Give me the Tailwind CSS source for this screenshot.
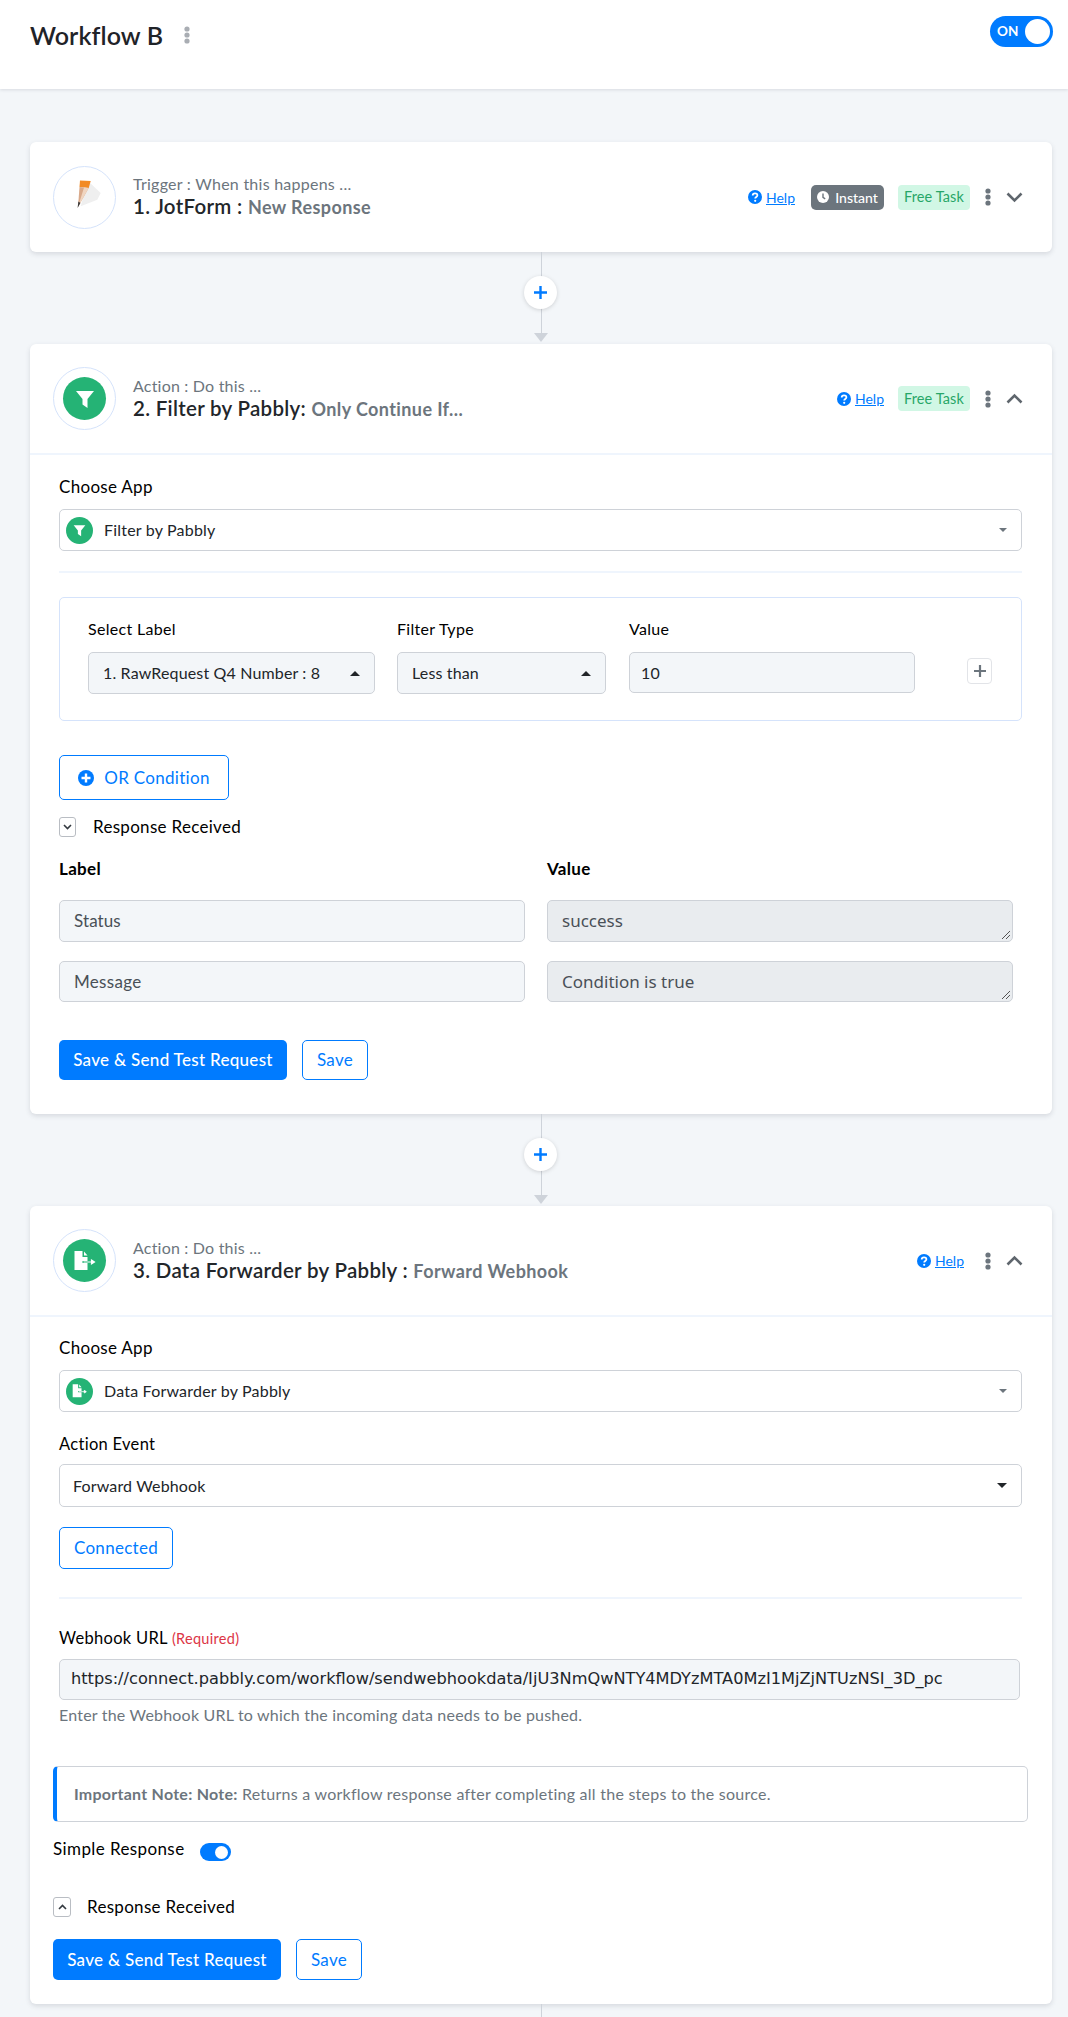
<!DOCTYPE html>
<html lang="en">
<head>
    <meta charset="UTF-8">
    <meta name="viewport" content="width=device-width, initial-scale=1.0">
    <title>Workflow B</title>
    <script src="https://cdn.jsdelivr.net/npm/@tailwindcss/browser@4"></script>
</head>
<body class="bg-[#f3f6f9] font-['Lato','Noto_Sans',sans-serif] text-[17px] tracking-[0.3px] text-black overflow-hidden h-[2017px]">
    <!-- top bar -->
    <header class="bg-white h-[89px] shadow-[0_1px_3px_rgba(60,70,90,0.15)] flex items-start justify-between pl-[30px] pr-[15px] relative">
        <div class="flex items-center mt-[19px] h-[32px]">
            <h1 class="text-[25px] tracking-[0.1px] font-semibold text-[#1f2328] leading-none">Workflow B</h1>
            <svg class="ml-[21px]" width="6" height="18" viewBox="0 0 6 18" fill="#a9adb3"><circle cx="3" cy="3" r="2.6"/><circle cx="3" cy="9" r="2.6"/><circle cx="3" cy="15" r="2.6"/></svg>
        </div>
        <div class="mt-[16px] w-[63px] h-[31px] rounded-full bg-[#007bff] flex items-center justify-between pl-[7px] pr-[3px]">
            <span class="text-white text-[13.5px] tracking-normal font-bold leading-none">ON</span>
            <span class="w-[25px] h-[25px] rounded-full bg-white"></span>
        </div>
    </header>

    <main class="pl-[30px] pr-[16px] pt-[53px]">
        <!-- step 1 -->
        <section class="bg-white rounded-[6px] shadow-[0_2px_5px_rgba(60,70,90,0.16)] h-[110px] flex items-center pl-[23px] pr-[29px]">
            <div class="w-[63px] h-[63px] rounded-full border border-[#d5e3fb] flex items-center justify-center shrink-0">
                <svg width="36" height="36" viewBox="0 0 36 36">
                    <path d="M21 2 L33.7 14 L30.3 20.7 L13.7 27.3 Z" fill="#efefef"/>
                    <path d="M13 1.5 L23.7 2 L21.7 9 L12.5 8 Z" fill="#f28a24"/>
                    <path d="M12.5 8 L21.7 9 L11 28 Z" fill="#d9a98a"/>
                    <path d="M17 8.5 L21.7 9 L11 28 Z" fill="#f0d5c0"/>
                    <path d="M11.4 22.5 L13.4 24 L10.6 29 Z" fill="#3a3a3a"/>
                </svg>
            </div>
            <div class="ml-[17px] flex-1">
                <p class="text-[16px] tracking-[0.25px] leading-[19px] text-[#6c757d]">Trigger : When this happens ...</p>
                <p class="text-[20.5px] leading-[26px] font-semibold text-[#22262a]">1. JotForm : <span class="text-[18px] tracking-[0.4px] font-bold text-[#6c757d]">New Response</span></p>
            </div>
            <div class="flex items-center tracking-normal">
                <a class="flex items-center text-[#007bff] text-[14px] underline gap-[4px]"><svg width="14" height="14" viewBox="0 0 14 14"><circle cx="7" cy="7" r="7" fill="#007bff"/><path d="M4.7 5.4 C4.7 2.6 9.4 2.6 9.4 5.3 C9.4 7 7.2 6.9 7.2 8.5" fill="none" stroke="#fff" stroke-width="1.8"/><circle cx="7.2" cy="10.8" r="1.1" fill="#fff"/></svg>Help</a>
                <span class="ml-[16px] h-[25px] w-[73px] rounded-[5px] bg-[#6c757d] text-white text-[14px] font-medium flex items-center justify-center gap-[6px]"><svg width="12" height="12" viewBox="0 0 12 12"><circle cx="6" cy="6" r="6" fill="#fff"/><path d="M6 2.6 V6.4 L8.2 7.8" fill="none" stroke="#6c757d" stroke-width="1.4"/></svg>Instant</span>
                <span class="ml-[14px] h-[25px] w-[72px] rounded-[4px] bg-[#d1f7e5] text-[#28a668] text-[14.5px] tracking-[0.1px] flex items-center justify-center">Free Task</span>
                <svg class="ml-[15px]" width="6" height="18" viewBox="0 0 6 18" fill="#6c757d"><circle cx="3" cy="3" r="2.6"/><circle cx="3" cy="9" r="2.6"/><circle cx="3" cy="15" r="2.6"/></svg>
                <svg class="ml-[15px]" width="17" height="11" viewBox="0 0 17 11"><path d="M1.5 1.5 L8.5 8.5 L15.5 1.5" fill="none" stroke="#5f666d" stroke-width="2.6"/></svg>
            </div>
        </section>

        <!-- connector -->
        <div class="relative h-[92px]">
            <div class="absolute left-[510.5px] top-0 w-[1.5px] h-[84px] bg-[#ced3da]"></div>
            <div class="absolute left-[504px] top-[81px] w-0 h-0 border-l-[7px] border-r-[7px] border-t-[9px] border-l-transparent border-r-transparent border-t-[#ced3da]"></div>
            <div class="absolute left-[494px] top-[24px] w-[33px] h-[33px] rounded-full bg-white shadow-[0_1px_4px_rgba(0,0,0,0.15)] flex items-center justify-center">
                <svg width="15" height="15" viewBox="0 0 15 15"><path d="M7.5 1 V14 M1 7.5 H14" stroke="#007bff" stroke-width="2.4"/></svg>
            </div>
        </div>

        <!-- step 2 -->
        <section class="bg-white rounded-[6px] shadow-[0_2px_5px_rgba(60,70,90,0.16)] h-[770px]">
            <div class="h-[111px] flex items-center pl-[23px] pr-[29px] border-b-2 border-[#eff5fd]">
                <div class="w-[63px] h-[63px] rounded-full border border-[#d5e3fb] flex items-center justify-center shrink-0">
                    <span class="w-[43px] h-[43px] rounded-full bg-[#25b375] flex items-center justify-center">
                        <svg width="20" height="20" viewBox="0 0 20 20"><path d="M1 2 H19 L12.5 10 V19 L7.5 15.5 V10 Z" fill="#fff"/></svg>
                    </span>
                </div>
                <div class="ml-[17px] flex-1">
                    <p class="text-[16px] tracking-[0.2px] leading-[19px] text-[#6c757d]">Action : Do this ...</p>
                    <p class="text-[20.5px] leading-[26px] font-semibold text-[#22262a]">2. Filter by Pabbly: <span class="text-[18px] tracking-[0.4px] font-bold text-[#6c757d]">Only Continue If...</span></p>
                </div>
                <div class="flex items-center tracking-normal">
                    <a class="flex items-center text-[#007bff] text-[14px] underline gap-[4px]"><svg width="14" height="14" viewBox="0 0 14 14"><circle cx="7" cy="7" r="7" fill="#007bff"/><path d="M4.7 5.4 C4.7 2.6 9.4 2.6 9.4 5.3 C9.4 7 7.2 6.9 7.2 8.5" fill="none" stroke="#fff" stroke-width="1.8"/><circle cx="7.2" cy="10.8" r="1.1" fill="#fff"/></svg>Help</a>
                    <span class="ml-[14px] h-[25px] w-[72px] rounded-[4px] bg-[#d1f7e5] text-[#28a668] text-[14.5px] tracking-[0.1px] flex items-center justify-center">Free Task</span>
                    <svg class="ml-[15px]" width="6" height="18" viewBox="0 0 6 18" fill="#6c757d"><circle cx="3" cy="3" r="2.6"/><circle cx="3" cy="9" r="2.6"/><circle cx="3" cy="15" r="2.6"/></svg>
                    <svg class="ml-[15px]" width="17" height="11" viewBox="0 0 17 11"><path d="M1.5 9.5 L8.5 2.5 L15.5 9.5" fill="none" stroke="#5f666d" stroke-width="2.6"/></svg>
                </div>
            </div>
            <div class="pl-[29px] pr-[30px]">
                <label class="block mt-[22px] leading-[20px]">Choose App</label>
                <div class="mt-[12px] h-[42px] rounded-[5px] border border-[#ced2d8] flex items-center pl-[6px] pr-[14px]">
                    <span class="w-[27px] h-[27px] rounded-full bg-[#25b375] flex items-center justify-center"><svg width="13" height="13" viewBox="0 0 20 20"><path d="M1 2 H19 L12.5 10 V19 L7.5 15.5 V10 Z" fill="#fff"/></svg></span>
                    <span class="ml-[11px] flex-1 text-[16px] tracking-[0.2px] text-[#212529]">Filter by Pabbly</span>
                    <span class="w-0 h-0 border-l-[4px] border-r-[4px] border-t-[4px] border-l-transparent border-r-transparent border-t-[#6c757d]"></span>
                </div>
                <div class="mt-[20px] h-[2px] bg-[#eff5fd]"></div>

                <!-- filter row -->
                <div class="mt-[24px] h-[124px] rounded-[5px] border border-[#d5e3fb] pl-[28px] pt-[21px] flex items-start text-[16px]">
                    <div class="w-[287px] shrink-0">
                        <label class="block leading-[20px]">Select Label</label>
                        <div class="mt-[13px] h-[42px] rounded-[5px] border border-[#ced2d8] bg-[#f3f6f9] flex items-center justify-between pl-[14px] pr-[14px]">
                            <span class="tracking-[0.15px] text-[#212529]">1. RawRequest Q4 Number : 8</span>
                            <span class="w-0 h-0 border-l-[5px] border-r-[5px] border-b-[5px] border-l-transparent border-r-transparent border-b-[#212529]"></span>
                        </div>
                    </div>
                    <div class="w-[209px] ml-[22px] shrink-0">
                        <label class="block leading-[20px]">Filter Type</label>
                        <div class="mt-[13px] h-[42px] rounded-[5px] border border-[#ced2d8] bg-[#f3f6f9] flex items-center justify-between pl-[14px] pr-[14px]">
                            <span class="tracking-[0.15px] text-[#212529]">Less than</span>
                            <span class="w-0 h-0 border-l-[5px] border-r-[5px] border-b-[5px] border-l-transparent border-r-transparent border-b-[#212529]"></span>
                        </div>
                    </div>
                    <div class="w-[286px] ml-[23px] shrink-0">
                        <label class="block leading-[20px]">Value</label>
                        <div class="mt-[13px] h-[41px] rounded-[5px] border border-[#ced2d8] bg-[#f3f6f9] flex items-center pl-[11px] text-[#212529]">10</div>
                    </div>
                    <div class="ml-[52px] mt-[39px] w-[25px] h-[26px] rounded-[4px] border border-[#e2e4e8] flex items-center justify-center">
                        <svg width="12" height="12" viewBox="0 0 12 12"><path d="M6 0 V12 M0 6 H12" stroke="#6c757d" stroke-width="2.2"/></svg>
                    </div>
                </div>

                <button class="mt-[34px] h-[45px] w-[170px] rounded-[5px] border border-[#007bff] text-[#007bff] flex items-center justify-center gap-[10px]">
                    <svg width="16" height="16" viewBox="0 0 16 16"><circle cx="8" cy="8" r="8" fill="#007bff"/><path d="M8 3.5 V12.5 M3.5 8 H12.5" stroke="#fff" stroke-width="2.4"/></svg>
                    OR Condition
                </button>
                <div class="mt-[17px] flex items-center h-[20px]">
                    <span class="w-[17px] h-[20px] rounded-[3px] border border-[#b9bdc3] flex items-center justify-center"><svg width="9" height="6" viewBox="0 0 9 6"><path d="M1 1 L4.5 4.5 L8 1" fill="none" stroke="#343a40" stroke-width="1.6"/></svg></span>
                    <span class="ml-[17px]">Response Received</span>
                </div>
                <div class="mt-[21px] grid grid-cols-[465.5px_465.5px] gap-x-[22.5px]">
                    <div class="font-bold leading-[22px]">Label</div>
                    <div class="font-bold leading-[22px]">Value</div>
                    <div class="mt-[20px] h-[42px] rounded-[5px] border border-[#ced2d8] bg-[#f3f6f9] flex items-center pl-[14px] tracking-[0.1px] text-[#495057]">Status</div>
                    <div class="mt-[20px] h-[42px] rounded-[5px] border border-[#ced2d8] bg-[#e9ecef] flex items-center pl-[14px] text-[#495057] font-['Noto_Sans',sans-serif] tracking-normal text-[17px] relative">success<svg class="absolute right-[1px] bottom-[1px]" width="10" height="10" viewBox="0 0 10 10"><path d="M9 1 L1 9 M9 5 L5 9" stroke="#555" stroke-width="1"/></svg></div>
                    <div class="mt-[19px] h-[41px] rounded-[5px] border border-[#ced2d8] bg-[#f3f6f9] flex items-center pl-[14px] text-[#495057]">Message</div>
                    <div class="mt-[19px] h-[41px] rounded-[5px] border border-[#ced2d8] bg-[#e9ecef] flex items-center pl-[14px] text-[#495057] font-['Noto_Sans',sans-serif] tracking-normal text-[17px] relative">Condition is true<svg class="absolute right-[1px] bottom-[1px]" width="10" height="10" viewBox="0 0 10 10"><path d="M9 1 L1 9 M9 5 L5 9" stroke="#555" stroke-width="1"/></svg></div>
                </div>
                <div class="mt-[38px] flex gap-[15px]">
                    <button class="h-[40px] w-[228px] rounded-[5px] bg-[#007bff] text-white font-medium">Save &amp; Send Test Request</button>
                    <button class="h-[40px] w-[66px] rounded-[5px] border border-[#007bff] text-[#007bff]">Save</button>
                </div>
            </div>
        </section>

        <!-- connector -->
        <div class="relative h-[92px]">
            <div class="absolute left-[510.5px] top-0 w-[1.5px] h-[84px] bg-[#ced3da]"></div>
            <div class="absolute left-[504px] top-[81px] w-0 h-0 border-l-[7px] border-r-[7px] border-t-[9px] border-l-transparent border-r-transparent border-t-[#ced3da]"></div>
            <div class="absolute left-[494px] top-[24px] w-[33px] h-[33px] rounded-full bg-white shadow-[0_1px_4px_rgba(0,0,0,0.15)] flex items-center justify-center">
                <svg width="15" height="15" viewBox="0 0 15 15"><path d="M7.5 1 V14 M1 7.5 H14" stroke="#007bff" stroke-width="2.4"/></svg>
            </div>
        </div>

        <!-- step 3 -->
        <section class="bg-white rounded-[6px] shadow-[0_2px_5px_rgba(60,70,90,0.16)] h-[798px]">
            <div class="h-[111px] flex items-center pl-[23px] pr-[29px] border-b-2 border-[#eff5fd]">
                <div class="w-[63px] h-[63px] rounded-full border border-[#d5e3fb] flex items-center justify-center shrink-0">
                    <span class="w-[43px] h-[43px] rounded-full bg-[#25b375] flex items-center justify-center">
                        <svg width="23" height="20" viewBox="0 0 22 20"><path d="M1 0 H9 V6 H14 V10 H9 V12 H14 V19 H1 Z M10.5 0.5 L14 4.5 H10.5 Z" fill="#fff"/><path d="M10 11 H20 M18 9 L21 11 L18 13 Z" fill="#fff" stroke="#fff" stroke-width="1.2"/></svg>
                    </span>
                </div>
                <div class="ml-[17px] flex-1">
                    <p class="text-[16px] tracking-[0.2px] leading-[19px] text-[#6c757d]">Action : Do this ...</p>
                    <p class="text-[20.5px] leading-[26px] font-semibold text-[#22262a]">3. Data Forwarder by Pabbly : <span class="text-[18px] tracking-[0.4px] font-bold text-[#6c757d]">Forward Webhook</span></p>
                </div>
                <div class="flex items-center tracking-normal">
                    <a class="flex items-center text-[#007bff] text-[14px] underline gap-[4px]"><svg width="14" height="14" viewBox="0 0 14 14"><circle cx="7" cy="7" r="7" fill="#007bff"/><path d="M4.7 5.4 C4.7 2.6 9.4 2.6 9.4 5.3 C9.4 7 7.2 6.9 7.2 8.5" fill="none" stroke="#fff" stroke-width="1.8"/><circle cx="7.2" cy="10.8" r="1.1" fill="#fff"/></svg>Help</a>
                    <svg class="ml-[21px]" width="6" height="18" viewBox="0 0 6 18" fill="#6c757d"><circle cx="3" cy="3" r="2.6"/><circle cx="3" cy="9" r="2.6"/><circle cx="3" cy="15" r="2.6"/></svg>
                    <svg class="ml-[15px]" width="17" height="11" viewBox="0 0 17 11"><path d="M1.5 9.5 L8.5 2.5 L15.5 9.5" fill="none" stroke="#5f666d" stroke-width="2.6"/></svg>
                </div>
            </div>
            <div class="pl-[29px] pr-[30px]">
                <label class="block mt-[21px] leading-[20px]">Choose App</label>
                <div class="mt-[12px] h-[42px] rounded-[5px] border border-[#ced2d8] flex items-center pl-[6px] pr-[14px]">
                    <span class="w-[27px] h-[27px] rounded-full bg-[#25b375] flex items-center justify-center"><svg width="15" height="14" viewBox="0 0 22 20"><path d="M1 0 H9 V6 H14 V10 H9 V12 H14 V19 H1 Z M10.5 0.5 L14 4.5 H10.5 Z" fill="#fff"/><path d="M10 11 H20 M18 9 L21 11 L18 13 Z" fill="#fff" stroke="#fff" stroke-width="1.2"/></svg></span>
                    <span class="ml-[11px] flex-1 text-[16px] tracking-[0.2px] text-[#212529]">Data Forwarder by Pabbly</span>
                    <span class="w-0 h-0 border-l-[4px] border-r-[4px] border-t-[4px] border-l-transparent border-r-transparent border-t-[#6c757d]"></span>
                </div>
                <label class="block mt-[22px] leading-[20px] text-[16.5px]">Action Event</label>
                <div class="mt-[10px] h-[43px] rounded-[5px] border border-[#ced2d8] flex items-center justify-between pl-[13px] pr-[14px]">
                    <span class="text-[16px] tracking-[0.15px] text-[#212529]">Forward Webhook</span>
                    <span class="w-0 h-0 border-l-[5px] border-r-[5px] border-t-[5px] border-l-transparent border-r-transparent border-t-[#212529]"></span>
                </div>
                <button class="mt-[20px] block h-[42px] w-[114px] rounded-[5px] border border-[#007bff] text-[#007bff]">Connected</button>
                <div class="mt-[28px] h-[2px] bg-[#eff5fd]"></div>
                <label class="block mt-[29px] leading-[20px] text-[16.5px]">Webhook URL <span class="text-[#dc3545] text-[14.5px]">(Required)</span></label>
                <div class="mt-[10px] mr-[2px] h-[41px] rounded-[5px] border border-[#ced2d8] bg-[#f3f6f9] flex items-center pl-[11px] font-['DejaVu_Sans',sans-serif] tracking-normal text-[16.2px] text-[#212529]">https://connect.pabbly.com/workflow/sendwebhookdata/IjU3NmQwNTY4MDYzMTA0MzI1MjZjNTUzNSI_3D_pc</div>
                <p class="mt-[5px] leading-[20px] text-[16px] tracking-[0.2px] text-[#6c757d]">Enter the Webhook URL to which the incoming data needs to be pushed.</p>
                <div class="-ml-[6px] -mr-[6px] mt-[41px] h-[56px] rounded-[5px] border border-[#ced2d8] border-l-4 border-l-[#007bff] flex items-center pl-[17px] text-[16px] tracking-[0.25px] text-[#6c757d]"><p><b>Important Note: Note:</b> Returns a workflow response after completing all the steps to the source.</p></div>
                <div class="-ml-[6px] mt-[15px] flex items-center h-[24px]">
                    <span class="tracking-[0.4px]">Simple Response</span>
                    <span class="ml-[15px] mt-[6px] w-[31px] h-[18px] rounded-full bg-[#007bff] flex items-center justify-end pr-[3px]"><span class="w-[13px] h-[13px] rounded-full bg-white"></span></span>
                </div>
                <div class="-ml-[6px] mt-[36px] flex items-center h-[20px]">
                    <span class="w-[18px] h-[20px] rounded-[3px] border border-[#b9bdc3] flex items-center justify-center"><svg width="9" height="6" viewBox="0 0 9 6"><path d="M1 5 L4.5 1.5 L8 5" fill="none" stroke="#343a40" stroke-width="1.6"/></svg></span>
                    <span class="ml-[16px]">Response Received</span>
                </div>
                <div class="-ml-[6px] mt-[22px] flex gap-[15px]">
                    <button class="h-[41px] w-[228px] rounded-[5px] bg-[#007bff] text-white font-medium">Save &amp; Send Test Request</button>
                    <button class="h-[41px] w-[66px] rounded-[5px] border border-[#007bff] text-[#007bff]">Save</button>
                </div>
            </div>
        </section>
        <div class="relative h-[13px]">
            <div class="absolute left-[510.5px] top-0 w-[1.5px] h-[13px] bg-[#ced3da]"></div>
        </div>
    </main>
</body>
</html>
